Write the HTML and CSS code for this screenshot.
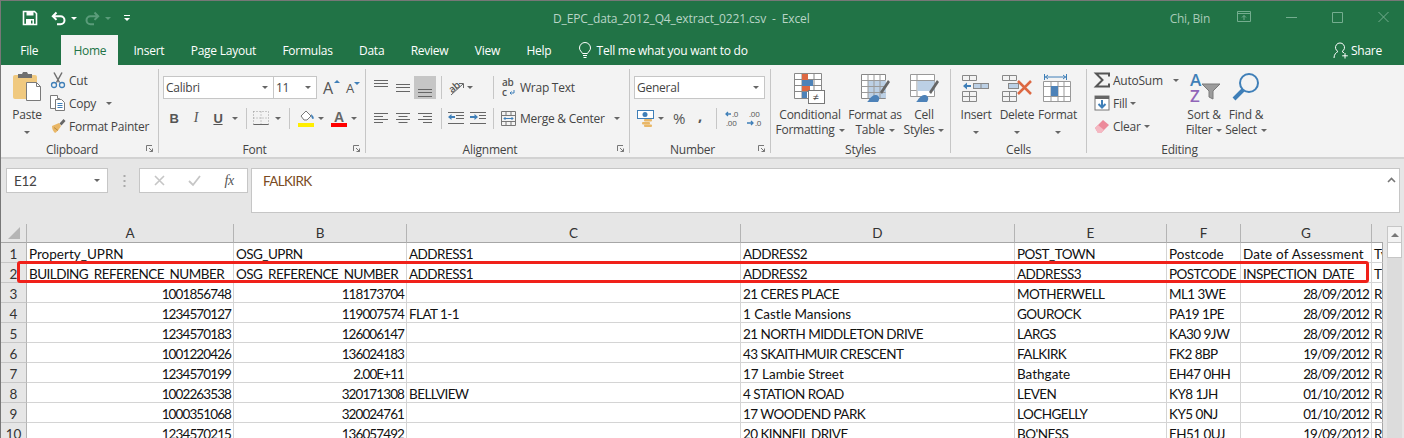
FILE: index.html
```html
<!DOCTYPE html>
<html lang="en">
<head>
  <meta charset="UTF-8">
  <title>D_EPC_data_2012_Q4_extract_0221.csv - Excel</title>
  <link rel="stylesheet" href="styles.css">
</head>
<body>
  <header class="titlebar">
    <div class="qat">
      <svg class="qat-save" width="16" height="16" viewBox="0 0 16 16"><path d="M1.5 1.5h11l2 2v11h-13z" fill="none" stroke="#fff" stroke-width="1.6"/><rect x="4.5" y="1.5" width="7" height="4" fill="#fff"/><rect x="4" y="9" width="8" height="5.5" fill="#fff"/><rect x="9" y="10.5" width="1.5" height="3" fill="#217346"/></svg>
      <svg class="qat-undo" width="15" height="15" viewBox="0 0 15 15"><path d="M5.5 1.5L1.8 5.2l3.7 3.7M2 5.2h7.5a4 4 0 0 1 0 8H6" fill="none" stroke="#fff" stroke-width="2"/></svg>
      <span class="caret caret-white qat-caret"></span>
      <svg class="qat-redo" width="15" height="15" viewBox="0 0 15 15"><path d="M9.5 1.5l3.7 3.7-3.7 3.7M13 5.2H5.5a4 4 0 0 0 0 8H9" fill="none" stroke="#5a9c7a" stroke-width="2"/></svg>
      <span class="caret caret-faded qat-caret"></span>
      <span class="qat-custom"><span class="caret caret-white"></span></span>
    </div>
    <div class="doc-title">D_EPC_data_2012_Q4_extract_0221.csv&nbsp; -&nbsp; Excel</div>
    <div class="user">Chi, Bin</div>
    <div class="winctl">
      <svg width="14" height="12" viewBox="0 0 14 12"><path d="M.5.5h13v10H.5zM.5 2.5h13M7 9V4.500M5 6.500l2-2 2 2" fill="none" stroke="#74ad8f"/></svg>
      <svg width="11" height="12" viewBox="0 0 11 12"><path d="M0 6.500h11" stroke="#74ad8f"/></svg>
      <svg width="11" height="12" viewBox="0 0 11 12"><path d="M.5 1.500h10v10H.5z" fill="none" stroke="#74ad8f"/></svg>
      <svg width="11" height="12" viewBox="0 0 11 12"><path d="M.5 1l10 10M10.500 1l-10 10" stroke="#74ad8f"/></svg>
    </div>
  </header>

  <nav class="tabs">
    <span class="tab tab-file">File</span>
    <span class="tab tab-active">Home</span>
    <span class="tab">Insert</span>
    <span class="tab">Page Layout</span>
    <span class="tab">Formulas</span>
    <span class="tab">Data</span>
    <span class="tab">Review</span>
    <span class="tab">View</span>
    <span class="tab">Help</span>
    <span class="tellme">
      <svg width="14" height="17" viewBox="0 0 14 17"><path d="M4.500 11.500C3.500 9.500 1.500 8.500 1.500 6a5.500 5.500 0 0 1 11 0c0 2.500-2 3.500-3 5.500zM5 13.500h4M5.500 15.500h3" fill="none" stroke="#fff"/></svg>
      Tell me what you want to do
    </span>
    <span class="share">
      <svg width="16" height="17" viewBox="0 0 16 17"><path d="M1 16c0-3.500 2-5.500 4-6.500a4.500 4.500 0 1 1 4 0c.8.400 1.400.800 2 1.400M12 11v5.500M9.200 13.800h5.600" fill="none" stroke="#fff"/></svg>
      Share
    </span>
  </nav>

  <section class="ribbon">
    <div class="group group-clipboard">
      <div class="group-body clip-body">
        <div class="paste">
          <svg width="30" height="32" viewBox="0 0 30 32"><rect x="1" y="5" width="24" height="24" rx="2" fill="#f0c97f"/><path d="M6 4h4l1-2h4l1 2h4v4H6z" fill="#6f6f6f"/><path d="M14.500 12.500h10l4 4v14h-14z" fill="#fff" stroke="#7a7a7a"/><path d="M24.500 12.500v4h4" fill="none" stroke="#7a7a7a"/></svg>
          <span class="big-label paste-label">Paste</span>
          <span class="big-label"><span class="caret"></span></span>
        </div>
        <div class="clip-rows">
          <div class="small-row">
            <svg width="16" height="16" viewBox="0 0 16 16"><path d="M4 0.500l5.500 10M12 0.500l-5.500 10" stroke="#6e6e6e" stroke-width="1.500"/><circle cx="4" cy="13" r="2.500" fill="none" stroke="#3f7fb8" stroke-width="1.300"/><circle cx="12" cy="13" r="2.500" fill="none" stroke="#3f7fb8" stroke-width="1.300"/></svg>
            Cut
          </div>
          <div class="small-row">
            <svg width="16" height="16" viewBox="0 0 16 16"><path d="M.5.500h7v3h2v10h-9z" fill="#fff" stroke="#7a7a7a"/><path d="M5.500 4.500h6l3 3v8h-9z" fill="#fff" stroke="#7a7a7a"/><path d="M7.500 8.500h5M7.500 10.500h5M7.500 12.500h5" stroke="#3f7fb8"/></svg>
            Copy <span class="caret caret-gap"></span>
          </div>
          <div class="small-row">
            <svg width="16" height="16" viewBox="0 0 16 16"><path d="M9 5L2 8c0 3 1 5 3 7 2-1 5-5 6-7z" fill="#e9b767"/><path d="M9.500 5.500l4-4.500 2 2-4 4.500z" fill="#666"/><path d="M4 9.500l4 3" stroke="#b98a3e"/></svg>
            Format Painter
          </div>
        </div>
      </div>
      <div class="group-label label-launch">Clipboard</div>
      <svg class="launcher" width="7" height="7" viewBox="0 0 7 7"><path d="M.5 6V.500H6M3 3l3.500 3.500M6.500 3.500v3h-3" fill="none" stroke="#777"/></svg>
    </div>

    <div class="group group-font">
      <div class="group-body stacked">
        <div class="tool-row">
          <div class="combo combo-name">Calibri<span class="caret"></span></div>
          <div class="combo combo-size">11<span class="caret"></span></div>
          <span class="grow">A<i class="tri-up"></i></span>
          <span class="shrink">A<i class="tri-down"></i></span>
        </div>
        <div class="tool-row row-two">
          <span class="tool fmt-b">B</span>
          <span class="tool fmt-i">I</span>
          <span class="tool fmt-u">U</span>
          <span class="tool tool-caret"><span class="caret"></span></span>
          <span class="sep sep-font-a"></span>
          <span class="tool tool-18"><svg width="16" height="14" viewBox="0 0 16 14"><path d="M.5.500h15M.5 7h15M.5.500v13M8 .500v13M15.500.500v13" fill="none" stroke="#999" stroke-dasharray="1 2"/><path d="M.5 13.500h15" stroke="#666"/></svg></span>
          <span class="tool tool-caret tool-caret-far"><span class="caret"></span></span>
          <span class="sep sep-font-b"></span>
          <span class="tool tool-18"><svg width="17" height="17" viewBox="0 0 17 17"><path d="M3 6l5-5 5 5-4 4H6z" fill="#fff" stroke="#777"/><path d="M13 4l2 2c1 1 1 3 0 3s-2-2-2-5z" fill="#3f7fb8"/><rect x="0" y="13" width="16" height="4" fill="#ffee00"/></svg></span>
          <span class="tool tool-caret"><span class="caret"></span></span>
          <span class="tool tool-18 font-color">A<i></i></span>
          <span class="tool tool-caret"><span class="caret"></span></span>
        </div>
      </div>
      <div class="group-label label-launch">Font</div>
      <svg class="launcher" width="7" height="7" viewBox="0 0 7 7"><path d="M.5 6V.500H6M3 3l3.500 3.500M6.500 3.500v3h-3" fill="none" stroke="#777"/></svg>
    </div>

    <div class="group group-align">
      <div class="group-body stacked">
        <div class="tool-row">
          <span class="tool"><svg width="14" height="22" viewBox="0 0 14 22"><path d="M0 3.500h14M0 6.500h14M0 9.500h14" stroke="#666"/></svg></span>
          <span class="tool"><svg width="14" height="22" viewBox="0 0 14 22"><path d="M0 7.500h14M0 10.500h14M0 14.500h14" stroke="#666"/></svg></span>
          <span class="tool tool-on"><svg width="14" height="22" viewBox="0 0 14 22"><path d="M0 12.500h14M0 15.500h14M0 19.500h14" stroke="#666"/></svg></span>
          <span class="sep sep-align-a"></span>
          <span class="tool tool-18"><svg width="18" height="20" viewBox="0 0 18 20"><text x="2" y="13" transform="rotate(-40 7 10)" class="svg-label">ab</text><path d="M4 17L16 6M12 5.500h4.500V10" fill="none" stroke="#666"/></svg></span>
          <span class="tool tool-10"><span class="caret"></span></span>
          <span class="sep sep-align-b"></span>
          <span class="wrap-btn">
            <svg width="15" height="18" viewBox="0 0 15 18"><text x="1" y="7" class="svg-label">ab</text><text x="1" y="17" class="svg-label">c</text><path d="M13 11v3H9M10.500 12.500L9 14l1.500 1.500" fill="none" stroke="#3f7fb8"/></svg>
            Wrap Text
          </span>
        </div>
        <div class="tool-row row-two">
          <span class="tool"><svg width="14" height="12" viewBox="0 0 14 12"><path d="M0 1.500h14M0 4.500h9M0 7.500h14M0 10.500h9" stroke="#666"/></svg></span>
          <span class="tool"><svg width="14" height="12" viewBox="0 0 14 12"><path d="M0 1.500h14M2.500 4.500h9M0 7.500h14M2.500 10.500h9" stroke="#666"/></svg></span>
          <span class="tool"><svg width="14" height="12" viewBox="0 0 14 12"><path d="M0 1.500h14M5 4.500h9M0 7.500h14M5 10.500h9" stroke="#666"/></svg></span>
          <span class="sep sep-align-c"></span>
          <span class="tool"><svg width="16" height="12" viewBox="0 0 16 12"><path d="M0 .500h16M8 3.500h8M8 6.500h8M0 11.500h16" stroke="#666"/><path d="M0 5l3.500-3v2H7v2H3.500v2z" fill="#3f7fb8"/></svg></span>
          <span class="tool"><svg width="16" height="12" viewBox="0 0 16 12"><path d="M0 .500h16M9 3.500h7M9 6.500h7M0 11.500h16" stroke="#666"/><path d="M8 5L4.500 2v2H0v2h4.500v2z" fill="#3f7fb8"/></svg></span>
          <span class="sep sep-align-d"></span>
          <span class="wrap-btn">
            <svg width="15" height="15" viewBox="0 0 15 15"><path d="M.5.500h14v14H.5zM.5 4.500h14M.5 10.500h14M5 .500v4M10 .500v4M5 10.500v4M10 10.500v4" fill="none" stroke="#777"/><path d="M3 7.500h9M4.500 6L3 7.500 4.500 9M10.500 6L12 7.500 10.500 9" fill="none" stroke="#3f7fb8"/></svg>
            Merge &amp; Center
          </span>
          <span class="caret merge-caret"></span>
        </div>
      </div>
      <div class="group-label label-launch">Alignment</div>
      <svg class="launcher" width="7" height="7" viewBox="0 0 7 7"><path d="M.5 6V.500H6M3 3l3.500 3.500M6.500 3.500v3h-3" fill="none" stroke="#777"/></svg>
    </div>

    <div class="group group-number">
      <div class="group-body stacked">
        <div class="tool-row">
          <div class="combo combo-general">General<span class="caret"></span></div>
        </div>
        <div class="tool-row row-two">
          <span class="tool"><svg width="17" height="17" viewBox="0 0 17 17"><rect x="0.500" y="0.500" width="16" height="8" fill="#fff" stroke="#3f7fb8"/><circle cx="8" cy="4.500" r="2.500" fill="#3f7fb8"/><rect x="7" y="9" width="8" height="2.500" rx="1" fill="#e9b767"/><rect x="5" y="12" width="8" height="2.500" rx="1" fill="#e9b767"/><rect x="7" y="14.500" width="8" height="2.500" rx="1" fill="#e9b767"/></svg></span>
          <span class="tool tool-10"><span class="caret"></span></span>
          <span class="tool tool-percent">%</span>
          <span class="tool tool-comma">,</span>
          <span class="sep sep-num"></span>
          <span class="tool tool-20"><svg width="16" height="17" viewBox="0 0 16 17"><text x="8" y="7" class="svg-small">.0</text><text x="2" y="16" class="svg-small">.00</text><path d="M7 4H2M4 2L2 4l2 2" fill="none" stroke="#3f7fb8" stroke-width="1.300"/></svg></span>
          <span class="tool tool-20 tool-decr"><svg width="16" height="17" viewBox="0 0 16 17"><text x="3" y="7" class="svg-small">.00</text><text x="9" y="16" class="svg-small">.0</text><path d="M1 13h6M5 11l2 2-2 2" fill="none" stroke="#3f7fb8" stroke-width="1.300"/></svg></span>
        </div>
      </div>
      <div class="group-label label-launch">Number</div>
      <svg class="launcher" width="7" height="7" viewBox="0 0 7 7"><path d="M.5 6V.500H6M3 3l3.500 3.500M6.500 3.500v3h-3" fill="none" stroke="#777"/></svg>
    </div>

    <div class="group group-styles">
      <div class="group-body big-row">
        <div class="big big-cf">
          <span class="big-icon"><svg width="32" height="33" viewBox="0 0 32 33"><path d="M.5 1.500h27v25H.5zM.5 7.500h27M.5 13.500h27M.5 19.500h27M8 1.500v25M20 1.500v25" fill="#fff" stroke="#888"/><rect x="8" y="2" width="6" height="6" fill="#dd6842"/><rect x="8" y="8" width="11" height="6" fill="#4d82b8"/><rect x="8" y="14" width="8" height="5" fill="#dd6842"/><rect x="8" y="20" width="5" height="6" fill="#4d82b8"/><rect x="14.500" y="18.500" width="16" height="13" fill="#fff" stroke="#777"/><text x="18.500" y="29" class="svg-neq">≠</text></svg></span>
          <span class="big-label">Conditional</span>
          <span class="big-label">Formatting<span class="caret caret-after"></span></span>
        </div>
        <div class="big big-table">
          <span class="big-icon"><svg width="30" height="30" viewBox="0 0 30 30"><path d="M1.500 1.500h24v24h-24z" fill="#fff" stroke="#888"/><rect x="8" y="7" width="18" height="18" fill="#bcd0e5"/><path d="M1.500 7.500h24M1.500 13.500h24M1.500 19.500h24M8 1.500v24M14 1.500v24M20 1.500v24" stroke="#9a9a9a"/><path d="M20 19L28 7l2 2-8 12z" fill="#666"/><path d="M7 29c2-1 3-6 8-7 3 0 5 2 4 5l-1 2z" fill="#4d82b8"/></svg></span>
          <span class="big-label">Format as</span>
          <span class="big-label">Table<span class="caret caret-after"></span></span>
        </div>
        <div class="big big-cell">
          <span class="big-icon"><svg width="30" height="30" viewBox="0 0 30 30"><path d="M1.500 1.500h24v22h-24zM1.500 7.500h24M8 1.500v22M1.500 17.500h6" fill="#fff" stroke="#999"/><rect x="8.500" y="8" width="17" height="10" fill="#bcd0e5"/><path d="M20 19L28 7l2 2-8 12z" fill="#666"/><path d="M7 29c2-1 3-6 8-7 3 0 5 2 4 5l-1 2z" fill="#4d82b8"/></svg></span>
          <span class="big-label">Cell</span>
          <span class="big-label">Styles<span class="caret caret-after"></span></span>
        </div>
      </div>
      <div class="group-label">Styles</div>
    </div>

    <div class="group group-cells">
      <div class="group-body big-row">
        <div class="big big-insert">
          <span class="big-icon"><svg width="28" height="30" viewBox="0 0 28 30"><path d="M.5 2.500h14v5H.5zM7.500 2.500v5M.5 18.500h14v10H.5zM7.500 18.500v10M.5 23.500h14" fill="none" stroke="#888"/><rect x="11.500" y="10.500" width="15" height="5" fill="#bcd0e5" stroke="#888"/><path d="M19 10.500v5" stroke="#888"/><path d="M1 13l4-3.500v2.500h4v2H5v2.500z" fill="#3f7fb8"/></svg></span>
          <span class="big-label">Insert</span>
          <span class="big-label"><span class="caret"></span></span>
        </div>
        <div class="big big-delete">
          <span class="big-icon"><svg width="31" height="30" viewBox="0 0 31 30"><path d="M.5 2.500h14v5H.5zM7.500 2.500v5M.5 18.500h14v10H.5zM7.500 18.500v10M.5 23.500h14" fill="none" stroke="#888"/><rect x="6.500" y="10.500" width="10" height="5" fill="#bcd0e5" stroke="#888"/><path d="M16 8l13 13M29 8L16 21" stroke="#dd6842" stroke-width="2.500"/></svg></span>
          <span class="big-label">Delete</span>
          <span class="big-label"><span class="caret"></span></span>
        </div>
        <div class="big big-format">
          <span class="big-icon"><svg width="29" height="33" viewBox="0 0 29 33"><path d="M1.500 2v6M23.500 2v6M2 5h21M5 3L2.500 5 5 7M20 3l2.500 2L20 7" fill="none" stroke="#3f7fb8"/><path d="M.5 9.500h27v20H.5zM.5 14.500h27M.5 24.500h27M8 9.500v20M15 9.500v20M21 9.500v20" fill="#fff" stroke="#999"/><rect x="8" y="14" width="7" height="10" fill="#4d82b8"/></svg></span>
          <span class="big-label">Format</span>
          <span class="big-label"><span class="caret"></span></span>
        </div>
      </div>
      <div class="group-label">Cells</div>
    </div>

    <div class="group group-edit">
      <div class="group-body big-row">
        <div class="edit-rows">
          <div class="small-row">
            <svg width="16" height="16" viewBox="0 0 16 16"><path d="M15 4.500V1.500H2l6.500 6.500L2 14.500h13v-3" fill="none" stroke="#555" stroke-width="2"/></svg>
            AutoSum <span class="caret caret-sum"></span>
          </div>
          <div class="small-row">
            <svg width="16" height="16" viewBox="0 0 16 16"><rect x="1" y="1" width="14" height="14" fill="#fff" stroke="#777"/><rect x="1" y="1" width="14" height="3" fill="#666"/><path d="M8 5v7M4.500 9L8 12.500 11.500 9" fill="none" stroke="#3f7fb8" stroke-width="2"/></svg>
            Fill<span class="caret"></span>
          </div>
          <div class="small-row">
            <svg width="16" height="16" viewBox="0 0 16 16"><path d="M1 10l8-8 6 5-8 8H4z" fill="#ec8a9a"/><path d="M1 10l3-3 6 5-3 3H4z" fill="#f4b8c2"/></svg>
            Clear<span class="caret"></span>
          </div>
        </div>
        <div class="big big-sort">
          <span class="big-icon"><svg width="31" height="32" viewBox="0 0 31 32"><text x="1" y="14" class="svg-a">A</text><text x="1" y="30" class="svg-z">Z</text><path d="M13 12h18l-7 7v8l-4-2v-6z" fill="#9c9c9c" stroke="#7a7a7a"/></svg></span>
          <span class="big-label">Sort &amp;</span>
          <span class="big-label">Filter<span class="caret caret-after"></span></span>
        </div>
        <div class="big big-find">
          <span class="big-icon"><svg width="28" height="32" viewBox="0 0 28 32"><circle cx="17" cy="11" r="9" fill="none" stroke="#3f7fb8" stroke-width="2"/><path d="M11 18L2 27" stroke="#3f7fb8" stroke-width="4"/></svg></span>
          <span class="big-label">Find &amp;</span>
          <span class="big-label">Select<span class="caret caret-after"></span></span>
        </div>
      </div>
      <div class="group-label label-edit">Editing</div>
    </div>
  </section>

  <section class="formula-bar">
    <div class="name-box">E12<span class="caret"></span></div>
    <svg class="dots" width="3" height="12" viewBox="0 0 3 12"><path d="M1.500 0v2M1.500 5v2M1.500 10v2" stroke="#aaa" stroke-width="2"/></svg>
    <div class="fx-box">
      <svg width="11" height="11" viewBox="0 0 11 11"><path d="M1 1l9 9M10 1l-9 9" stroke="#c6c6c6" stroke-width="1.600"/></svg>
      <svg width="13" height="11" viewBox="0 0 13 11"><path d="M1 6l4 4 7-9" fill="none" stroke="#c6c6c6" stroke-width="1.800"/></svg>
      <span class="fx">fx</span>
    </div>
    <div class="formula-input">
      FALKIRK
      <svg class="collapse" width="9" height="6" viewBox="0 0 9 6"><path d="M1 5l3.500-3.500L8 5" fill="none" stroke="#777" stroke-width="1.600"/></svg>
    </div>
  </section>

  <main class="sheet">
    <div class="grid-wrap">
      <table class="grid">
        <colgroup>
          <col class="c-head"><col class="c-a"><col class="c-b"><col class="c-c"><col class="c-d"><col class="c-e"><col class="c-f"><col class="c-g"><col class="c-h">
        </colgroup>
        <thead>
          <tr>
            <th class="corner"><svg width="12" height="12" viewBox="0 0 12 12"><path d="M12 0v12H0z" fill="#b5b5b5"/></svg></th>
            <th>A</th><th>B</th><th>C</th><th>D</th><th>E</th><th>F</th><th>G</th><th></th>
          </tr>
        </thead>
        <tbody>
          <tr class="row-one"><th>1</th><td>Property_UPRN</td><td class="cap">OSG_UPRN</td><td class="cap">ADDRESS1</td><td class="cap">ADDRESS2</td><td class="cap">POST_TOWN</td><td>Postcode</td><td class="wide">Date of Assessment</td><td>Type</td></tr>
          <tr><th>2</th><td class="cap">BUILDING_REFERENCE_NUMBER</td><td class="cap">OSG_REFERENCE_NUMBER</td><td class="cap">ADDRESS1</td><td class="cap">ADDRESS2</td><td class="cap">ADDRESS3</td><td class="cap">POSTCODE</td><td class="cap">INSPECTION_DATE</td><td>TYPE</td></tr>
          <tr><th>3</th><td class="num">1001856748</td><td class="num">118173704</td><td></td><td class="cap">21 CERES PLACE</td><td class="cap">MOTHERWELL</td><td class="cap">ML1 3WE</td><td class="num">28/09/2012</td><td>R</td></tr>
          <tr><th>4</th><td class="num">1234570127</td><td class="num">119007574</td><td class="cap">FLAT 1-1</td><td>1 Castle Mansions</td><td class="cap">GOUROCK</td><td class="cap">PA19 1PE</td><td class="num">28/09/2012</td><td>R</td></tr>
          <tr><th>5</th><td class="num">1234570183</td><td class="num">126006147</td><td></td><td class="cap">21 NORTH MIDDLETON DRIVE</td><td class="cap">LARGS</td><td class="cap">KA30 9JW</td><td class="num">28/09/2012</td><td>R</td></tr>
          <tr><th>6</th><td class="num">1001220426</td><td class="num">136024183</td><td></td><td class="cap">43 SKAITHMUIR CRESCENT</td><td class="cap">FALKIRK</td><td class="cap">FK2 8BP</td><td class="num">19/09/2012</td><td>R</td></tr>
          <tr><th>7</th><td class="num">1234570199</td><td class="num">2.00E+11</td><td></td><td>17 Lambie Street</td><td>Bathgate</td><td class="cap">EH47 0HH</td><td class="num">28/09/2012</td><td>R</td></tr>
          <tr><th>8</th><td class="num">1002263538</td><td class="num">320171308</td><td class="cap">BELLVIEW</td><td class="cap">4 STATION ROAD</td><td class="cap">LEVEN</td><td class="cap">KY8 1JH</td><td class="num">01/10/2012</td><td>R</td></tr>
          <tr><th>9</th><td class="num">1000351068</td><td class="num">320024761</td><td></td><td class="cap">17 WOODEND PARK</td><td class="cap">LOCHGELLY</td><td class="cap">KY5 0NJ</td><td class="num">01/10/2012</td><td>R</td></tr>
          <tr><th>10</th><td class="num">1234570215</td><td class="num">136057492</td><td></td><td class="cap">20 KINNEIL DRIVE</td><td class="cap">BO'NESS</td><td class="cap">EH51 0UJ</td><td class="num">19/09/2012</td><td>R</td></tr>
        </tbody>
      </table>
      <div class="highlight"></div>
    </div>
    <div class="vscroll">
      <div class="vscroll-up"><span class="tri-scroll"></span></div>
      <div class="vscroll-thumb"></div>
    </div>
  </main>
</body>
</html>
```

FILE: styles.css
```css
* {
  box-sizing: border-box;
}

html, body {
  height: 100%;
}

body {
  margin: 0;
  overflow: hidden;
  background-color: #e6e6e6;
  border-top: 1px solid #777777;
  border-left: 1px solid #777777;
  font-family: 'Open Sans', sans-serif;
  font-size: 12px;
  letter-spacing: -0.25px;
  color: #444444;
}

svg {
  overflow: visible;
}

/* title bar */
.titlebar {
  display: flex;
  align-items: center;
  height: 34px;
  background-color: #217346;
  color: #b9d5c6;
}

.qat {
  display: flex;
  align-items: center;
  width: 552px;
  padding-left: 21px;
}

.qat-undo {
  margin-left: 13px;
}

.qat-redo {
  margin-left: 8px;
}

.qat-caret {
  margin-left: 5px;
}

.qat-custom {
  display: flex;
  margin-left: 13px;
  padding-top: 2px;
  border-top: 1px solid #ffffff;
}

.doc-title {
  letter-spacing: -0.12px;
}

.user {
  margin-left: auto;
  margin-right: 27px;
  color: #a8cbb8;
}

.winctl {
  display: flex;
  align-items: center;
  gap: 35px;
  width: 167px;
  padding-bottom: 3px;
}

/* tabs */
.tabs {
  display: flex;
  align-items: stretch;
  height: 30px;
  padding-left: 6px;
  background-color: #217346;
  color: #ffffff;
}

.tab {
  display: flex;
  align-items: center;
  padding: 0 13.2px;
}

.tab-file {
  margin-right: 10px;
}

.tab-active {
  padding: 0 12px;
  margin-right: 2px;
  background-color: #f3f3f3;
  color: #217346;
}

.tellme {
  display: flex;
  align-items: center;
  gap: 5px;
  margin-left: 13px;
}

.share {
  display: flex;
  align-items: center;
  gap: 2px;
  margin-left: auto;
  margin-right: 22px;
}

/* ribbon */
.ribbon {
  display: flex;
  height: 94px;
  padding-top: 4px;
  background-color: #f3f3f3;
  border-bottom: 2px solid #d2d2d2;
}

.group {
  position: relative;
  display: flex;
  flex-direction: column;
  height: 84px;
  border-right: 1px solid #c6c6c6;
}

.group-clipboard { width: 158px; }
.group-font { width: 207px; }
.group-align { width: 264px; }
.group-number { width: 141px; }
.group-styles { width: 180px; }
.group-cells { width: 136px; }
.group-edit { width: 190px; border-right: none; }

.group-body {
  flex: 1;
  min-height: 0;
}

.group-label {
  height: 16px;
  margin-bottom: -5px;
  line-height: 16px;
  text-align: center;
}

.label-launch {
  padding-right: 15px;
}

.label-edit {
  padding-right: 5px;
}

.launcher {
  position: absolute;
  right: 5px;
  bottom: 1px;
}

.caret {
  display: inline-block;
  width: 0;
  height: 0;
  border-left: 3px solid transparent;
  border-right: 3px solid transparent;
  border-top: 3px solid #666666;
}

.caret-white { border-top-color: #ffffff; }
.caret-faded { border-top-color: #5a9c7a; }
.caret-gap { margin-left: 7px; }
.caret-after { margin-left: 4px; vertical-align: middle; }
.caret-sum { margin-left: 7px; }

.big-label {
  display: block;
  height: 15px;
  line-height: 15px;
  white-space: nowrap;
}

.small-row {
  display: flex;
  align-items: center;
  gap: 3px;
  height: 22px;
  white-space: nowrap;
}

/* clipboard */
.clip-body {
  display: flex;
  padding-left: 3px;
}

.paste {
  display: flex;
  flex-direction: column;
  align-items: center;
  width: 46px;
}

.paste svg {
  height: 34px;
  margin-bottom: 3px;
}

.paste-label {
  margin-top: 1px;
}

.clip-rows, .edit-rows {
  display: flex;
  flex-direction: column;
  gap: 1px;
}

/* stacked tool rows */
.stacked {
  padding-top: 7px;
  padding-left: 4px;
}

.tool-row {
  display: flex;
  align-items: center;
  height: 23px;
}

.row-two {
  height: 22px;
  margin-top: 8px;
}

.combo {
  display: flex;
  align-items: center;
  justify-content: space-between;
  height: 23px;
  padding: 0 5px 0 2px;
  background-color: #ffffff;
  border: 1px solid #c6c6c6;
}

.combo-name { width: 111px; }
.combo-size { width: 44px; margin-left: -1px; }
.combo-general { width: 131px; }

.grow, .shrink {
  position: relative;
  color: #555555;
}

.grow {
  margin-left: 6px;
  width: 23px;
  font-size: 16px;
}

.shrink {
  width: 14px;
  font-size: 13px;
}

.tri-up, .tri-down {
  position: absolute;
  top: 3px;
  right: 6px;
  border-left: 3px solid transparent;
  border-right: 3px solid transparent;
}

.tri-up { border-bottom: 3px solid #3f7fb8; }
.tri-down { right: 0; border-top: 3px solid #3f7fb8; }

.tool {
  display: flex;
  align-items: center;
  justify-content: center;
  flex: none;
  width: 22px;
  height: 22px;
}

.tool-18 { width: 18px; }
.tool-20 { width: 20px; }
.tool-10 { width: 10px; }
.tool-caret { width: 12px; }
.tool-caret-far { margin-left: 2px; }
.tool-on { height: 23px; background-color: #c6c6c6; }
.tool-decr { margin-left: 2px; }

.fmt-b, .fmt-i, .fmt-u {
  font-family: 'Liberation Sans', sans-serif;
  font-size: 13px;
  color: #555555;
}

.fmt-b { font-weight: bold; }
.fmt-i { font-style: italic; font-family: 'Liberation Serif', serif; font-size: 14px; }
.fmt-u { font-weight: bold; text-decoration: underline; }

.font-color {
  position: relative;
  margin-left: 3px;
  font-family: 'Liberation Sans', sans-serif;
  font-weight: bold;
  font-size: 14px;
  padding-bottom: 3px;
  color: #666666;
}

.font-color i {
  position: absolute;
  left: 1px;
  bottom: 2px;
  width: 16px;
  height: 4px;
  background-color: #ff0000;
}

.sep {
  flex: none;
  width: 1px;
  height: 21px;
  background-color: #c6c6c6;
}

.tool-row:first-child .sep {
  height: 23px;
}

.sep-font-a { margin: 0 5px; }
.sep-font-b { margin: 0 7px 0 5px; }
.sep-align-a { margin: 0 5px; }
.sep-align-b { margin: 0 7px 0 18px; }
.sep-align-c { margin: 0 3px 0 5px; }
.sep-align-d { margin: 0 7px 0 4px; }
.sep-num { margin: 0 5px 0 6px; }

.wrap-btn {
  display: flex;
  align-items: center;
  gap: 4px;
  white-space: nowrap;
}

.merge-caret {
  margin-left: 9px;
}

.tool-percent {
  margin-left: 2px;
  font-size: 15px;
  color: #555555;
}

.tool-comma {
  width: 20px;
  padding-bottom: 6px;
  font-size: 15px;
  font-weight: bold;
  color: #555555;
}

.svg-label {
  font-family: 'Open Sans', sans-serif;
  font-size: 10px;
  font-weight: 600;
  fill: #555555;
}

.svg-small {
  font-family: 'Open Sans', sans-serif;
  font-size: 8px;
  fill: #555555;
}

.svg-neq {
  font-family: 'Open Sans', sans-serif;
  font-size: 11px;
  fill: #444444;
}

.svg-a, .svg-z {
  font-family: 'Open Sans', sans-serif;
  font-size: 17px;
  font-weight: 600;
}

.svg-a { fill: #3f7fb8; }
.svg-z { fill: #9065b8; }

/* big ribbon buttons */
.big-row {
  display: flex;
}

.big {
  display: flex;
  flex-direction: column;
  align-items: center;
  flex: none;
}

.big-icon {
  display: flex;
  align-items: center;
  justify-content: center;
  height: 38px;
}

.group-styles .big-row { padding-left: 5px; }
.big-cf { width: 68px; }
.big-table { width: 62px; }
.big-cell { width: 36px; }

.group-cells .big-row { padding-left: 6px; }
.big-insert { width: 38px; }
.big-delete { width: 44px; }
.big-format { width: 37px; }

.group-edit .big-row { padding-left: 7px; }
.edit-rows { width: 88px; }
.big-sort { width: 44px; }
.big-find { width: 40px; }

/* formula bar */
.formula-bar {
  display: flex;
  align-items: flex-start;
  height: 65px;
  padding: 9px 4px 0 5px;
  background-color: #e6e6e6;
}

.name-box {
  display: flex;
  align-items: center;
  justify-content: space-between;
  width: 102px;
  height: 25px;
  padding: 0 7px;
  background-color: #ffffff;
  border: 1px solid #c6c6c6;
  font-family: 'Lato', sans-serif;
  font-size: 13.5px;
  letter-spacing: -0.3px;
}

.dots {
  margin: 7px 13px 0 15px;
}

.fx-box {
  display: flex;
  align-items: center;
  justify-content: space-between;
  width: 109px;
  height: 25px;
  padding: 0 13px 0 14px;
  background-color: #ffffff;
  border: 1px solid #c6c6c6;
}

.fx {
  font-family: 'Liberation Serif', serif;
  font-style: italic;
  font-size: 14px;
  color: #555555;
}

.formula-input {
  position: relative;
  flex: 1;
  height: 45px;
  margin-left: 3px;
  padding: 4px 11px;
  background-color: #ffffff;
  border: 1px solid #c6c6c6;
  font-family: 'Lato', sans-serif;
  font-size: 13.5px;
  letter-spacing: -0.65px;
  color: #7a4b22;
}

.collapse {
  position: absolute;
  top: 8px;
  right: 3px;
}

/* sheet */
.sheet {
  display: flex;
  align-items: flex-start;
}

.grid-wrap {
  position: relative;
}

.grid {
  table-layout: fixed;
  width: 1382px;
  border-collapse: separate;
  border-spacing: 0;
  font-family: 'Lato', sans-serif;
  font-size: 13.5px;
  letter-spacing: 0;
  color: #111111;
}

.c-head { width: 26px; }
.c-a { width: 207px; }
.c-b { width: 173px; }
.c-c { width: 334px; }
.c-d { width: 274px; }
.c-e { width: 152px; }
.c-f { width: 74px; }
.c-g { width: 131px; }
.c-h { width: 11px; }

.grid th {
  padding: 0;
  font-weight: normal;
  text-align: center;
  background-color: #e6e6e6;
  color: #333333;
  border-right: 1px solid #b4b4b4;
  border-bottom: 1px solid #c6c6c6;
}

.grid thead th {
  height: 19px;
  border-bottom: 1px solid #a6a6a6;
}

.grid thead th:last-child {
  border-right: none;
}

.grid tbody th {
  height: 20px;
  padding-top: 2px;
  line-height: 16px;
}

.corner {
  line-height: 0;
  vertical-align: middle;
}

.grid td {
  height: 20px;
  padding: 3px 2px 0;
  overflow: hidden;
  white-space: nowrap;
  line-height: 16px;
  vertical-align: bottom;
  background-color: #ffffff;
  border-right: 1px solid #d4d4d4;
  border-bottom: 1px solid #d4d4d4;
}

.grid .row-one td {
  padding-top: 4px;
  line-height: 15px;
}

.grid td:last-child {
  border-right: 1px solid #a6a6a6;
}

.grid td.num {
  text-align: right;
  letter-spacing: -0.9px;
}

.grid td.cap {
  letter-spacing: -0.55px;
}

.grid td.wide {
  letter-spacing: 0.2px;
}

/* red box over row 2, it hides the underscores like in the screenshot */
.highlight {
  position: absolute;
  top: 37px;
  left: 16px;
  width: 1352px;
  height: 22px;
  border: 3px solid #f0211a;
  border-radius: 3px;
}

.vscroll {
  width: 15px;
  height: 214px;
  margin: 2px 0 0 4px;
  background-color: #dcdcdc;
}

.vscroll-up {
  display: flex;
  align-items: center;
  justify-content: center;
  height: 17px;
  background-color: #f3f3f3;
  border: 1px solid #c6c6c6;
}

.tri-scroll {
  border-left: 4px solid transparent;
  border-right: 4px solid transparent;
  border-bottom: 4px solid #777777;
}

.vscroll-thumb {
  height: 15px;
  background-color: #ffffff;
  border: 1px solid #c6c6c6;
  border-top: none;
}
```
